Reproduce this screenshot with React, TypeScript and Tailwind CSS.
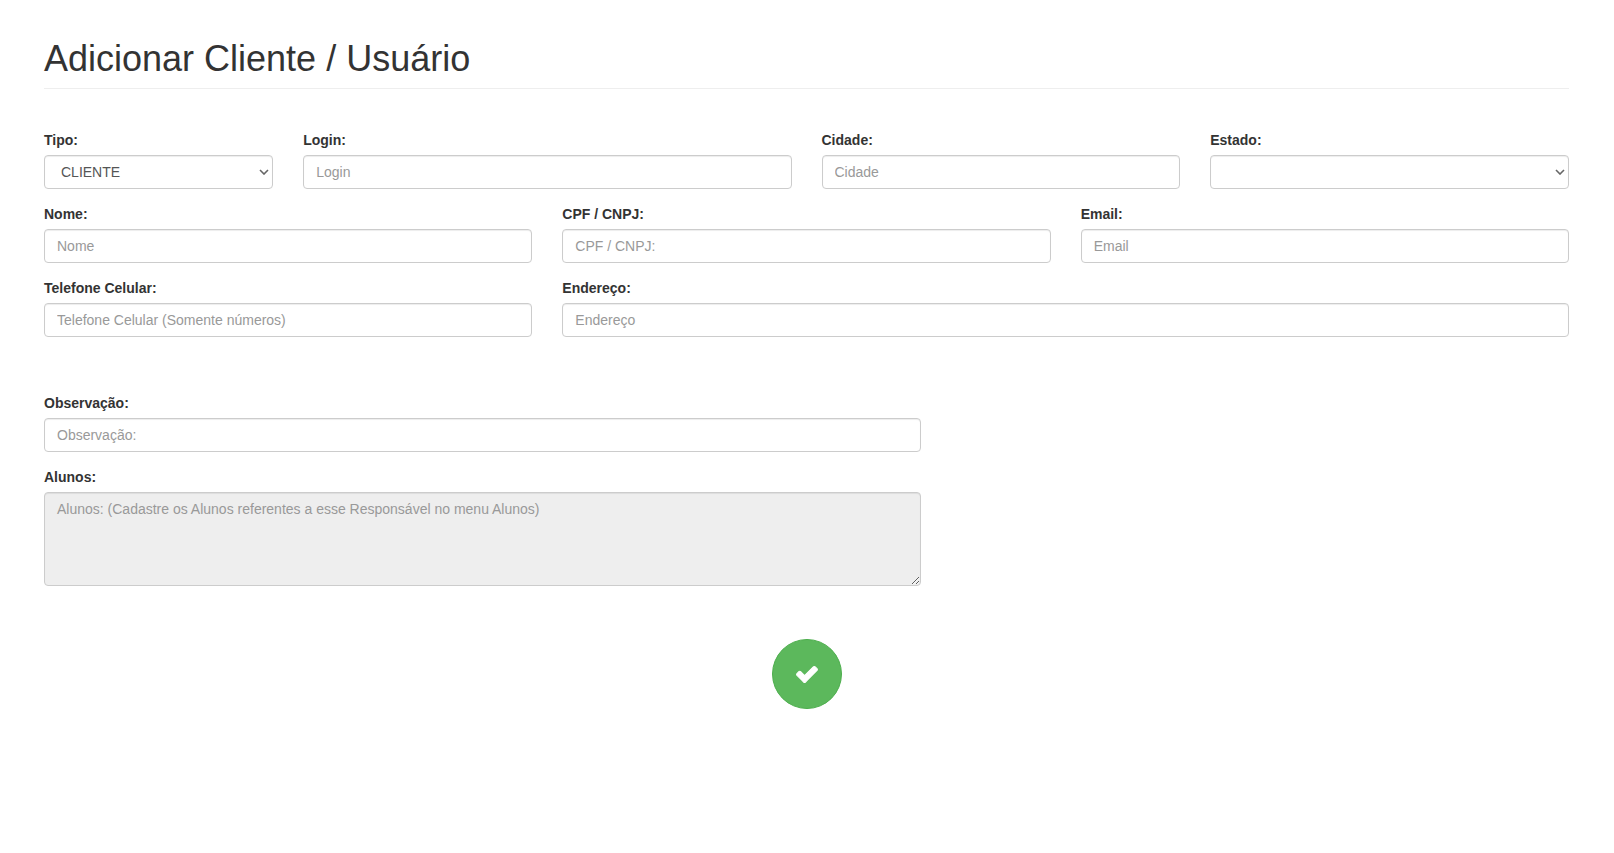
import React from "react";

const controlClass =
  "block w-full h-[34px] px-3 py-1.5 text-sm leading-5 text-[#555] bg-white border border-[#ccc] rounded shadow-[inset_0_1px_1px_rgba(0,0,0,0.075)] placeholder:text-[#999] focus:outline-none focus:border-[#66afe9]";

const selectClass =
  "block w-full h-[34px] pl-4 pr-6 py-1.5 text-sm leading-5 text-[#555] bg-white border border-[#ccc] rounded shadow-[inset_0_1px_1px_rgba(0,0,0,0.075)] appearance-none focus:outline-none focus:border-[#66afe9]";

const labelClass = "block mb-[5px] text-sm leading-5 font-bold";

const estados = [
  "", "AC", "AL", "AP", "AM", "BA", "CE", "DF", "ES", "GO", "MA", "MT", "MS", "MG",
  "PA", "PB", "PR", "PE", "PI", "RJ", "RN", "RS", "RO", "RR", "SC", "SP", "SE", "TO",
];

function Campo({ id, label, span, children }: any) {
  return (
    <div className={span}>
      <label htmlFor={id} className={labelClass}>{label}</label>
      {children}
    </div>
  );
}

function CampoTexto({ id, label, span, placeholder, type = "text" }: any) {
  return (
    <Campo id={id} label={label} span={span}>
      <input id={id} name={id} type={type} placeholder={placeholder} className={controlClass} />
    </Campo>
  );
}

function CampoSelect({ id, label, span, value, options }: any) {
  return (
    <Campo id={id} label={label} span={span}>
      <div className="relative">
        <select id={id} name={id} defaultValue={value} className={selectClass}>
          {options.map((op: string) => (
            <option key={op} value={op}>{op}</option>
          ))}
        </select>
        <svg
          viewBox="0 0 10 6"
          className="absolute right-1 inset-y-0 my-auto w-2.5 h-1.5 pointer-events-none fill-none stroke-[#666]"
          aria-hidden="true"
        >
          <path d="M1 1l4 4 4-4" strokeWidth="1.6" />
        </svg>
      </div>
    </Campo>
  );
}

export default function App() {
  return (
    <main className="pl-11 pr-[45px] pt-[39px] pb-10 font-['Liberation_Sans',Arial,sans-serif] text-sm text-[#333]">
      <header className="pb-[9px] mb-[41px] border-b border-[#eee]">
        <h1 className="text-4xl leading-10 font-medium">Adicionar Cliente / Usuário</h1>
      </header>

      <form onSubmit={(e) => e.preventDefault()}>
        {/* Dados do cliente */}
        <div className="grid grid-cols-12 gap-x-[30px] gap-y-[15px]">
          <CampoSelect id="tipo" label="Tipo:" span="col-span-2" value="CLIENTE" options={["CLIENTE", "USUÁRIO"]} />
          <CampoTexto id="login" label="Login:" span="col-span-4" placeholder="Login" />
          <CampoTexto id="cidade" label="Cidade:" span="col-span-3" placeholder="Cidade" />
          <CampoSelect id="estado" label="Estado:" span="col-span-3" value="" options={estados} />

          <CampoTexto id="nome" label="Nome:" span="col-span-4" placeholder="Nome" />
          <CampoTexto id="documento" label="CPF / CNPJ:" span="col-span-4" placeholder="CPF / CNPJ:" />
          <CampoTexto id="email" label="Email:" span="col-span-4" placeholder="Email" type="email" />

          <CampoTexto id="telefone" label="Telefone Celular:" span="col-span-4" placeholder="Telefone Celular (Somente números)" />
          <CampoTexto id="endereco" label="Endereço:" span="col-span-8" placeholder="Endereço" />
        </div>

        {/* Observação e alunos */}
        <div className="mt-14 grid grid-cols-12 gap-x-[30px] gap-y-[15px]">
          <CampoTexto id="observacao" label="Observação:" span="col-span-7" placeholder="Observação:" />
          <Campo id="alunos" label="Alunos:" span="col-span-7 col-start-1">
            <textarea
              id="alunos"
              name="alunos"
              rows={4}
              readOnly
              placeholder="Alunos: (Cadastre os Alunos referentes a esse Responsável no menu Alunos)"
              className="block w-full px-3 py-1.5 text-sm leading-5 text-[#555] bg-[#eee] border border-[#ccc] rounded shadow-[inset_0_1px_1px_rgba(0,0,0,0.075)] placeholder:text-[#999] resize focus:outline-none"
            />
          </Campo>
        </div>

        <div className="mt-[53px] flex justify-center">
          <button
            type="submit"
            aria-label="Salvar"
            className="flex items-center justify-center size-[70px] rounded-full bg-[#5cb85c] border border-[#4cae4c] text-white hover:bg-[#449d44]"
          >
            <svg viewBox="0 0 1792 1792" className="size-6 fill-current stroke-current" aria-hidden="true">
              <path
                strokeWidth="80"
                strokeLinejoin="round"
                d="M1671 566q0 40-28 68l-724 724-136 136q-28 28-68 28t-68-28l-136-136-362-362q-28-28-28-68t28-68l136-136q28-28 68-28t68 28l294 295 656-657q28-28 68-28t68 28l136 136q28 28 28 68z"
              />
            </svg>
          </button>
        </div>
      </form>
    </main>
  );
}
